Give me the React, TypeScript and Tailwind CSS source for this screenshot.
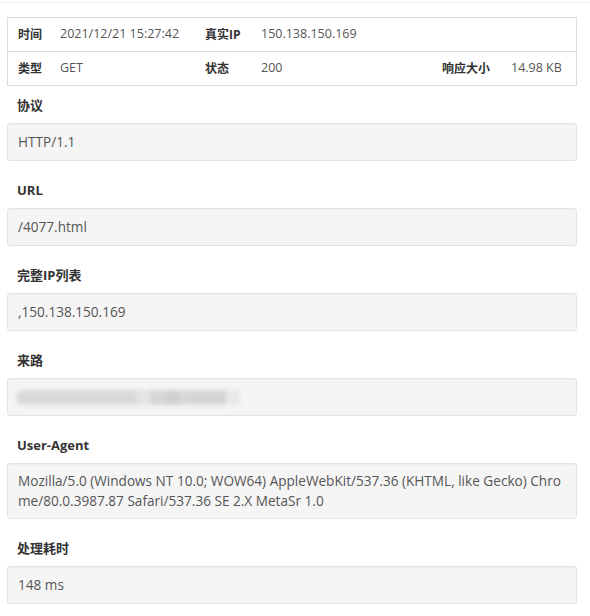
import React from 'react';

const font = { fontFamily: '"Open Sans", "Noto Sans CJK SC", sans-serif' };

const Field: React.FC<{ label: string; children: React.ReactNode; tall?: boolean }> = ({ label, children, tall }) => (
  <div>
    <div className="h-[37px] pl-[10px] pt-[10px] text-[13px] font-bold text-[#333] leading-[18px]">{label}</div>
    <div
      className={`rounded-[3px] border border-[#e3e3e3] bg-[#f5f5f5] px-[10px] text-[13.6px] text-[#555] shadow-[inset_0_1px_1px_rgba(0,0,0,0.03)] ${
        tall ? 'py-[7px] leading-[20px] break-all' : 'h-[38px] flex items-center'
      }`}
    >
      {children}
    </div>
  </div>
);

const cols = 'grid grid-cols-[42px_145px_56px_181px_69px_1fr] items-center';

export default function App() {
  return (
    <div className="w-[590px] h-[616px] bg-white" style={font}>
      <div className="h-[3px] border-b border-[#eeeeee]" />
      <div className="pl-[7px] pr-[13px] pt-[14px] flex flex-col gap-[10px]">
        <div className="border border-[#dddddd] text-[12.5px]">
          <div className={`${cols} h-[34px] border-b border-[#dddddd]`}>
            <div className="pl-[10px] font-bold text-[#333] text-[12px]">时间</div>
            <div className="pl-[10px] text-[#555]">2021/12/21 15:27:42</div>
            <div className="pl-[10px] font-bold text-[#333] text-[12px]">真实IP</div>
            <div className="pl-[10px] text-[#555]">150.138.150.169</div>
            <div />
            <div />
          </div>
          <div className={`${cols} h-[33px]`}>
            <div className="pl-[10px] font-bold text-[#333] text-[12px]">类型</div>
            <div className="pl-[10px] text-[#555]">GET</div>
            <div className="pl-[10px] font-bold text-[#333] text-[12px]">状态</div>
            <div className="pl-[10px] text-[#555]">200</div>
            <div className="pl-[10px] font-bold text-[#333] text-[12px] whitespace-nowrap">响应大小</div>
            <div className="pl-[10px] text-[#555]">14.98 KB</div>
          </div>
        </div>
        <div className="flex flex-col gap-[10px] -mt-[10px]">
          <Field label="协议">HTTP/1.1</Field>
          <Field label="URL">/4077.html</Field>
          <Field label="完整IP列表">,150.138.150.169</Field>
          <Field label="来路">
            <div className="flex items-center h-[18px] -ml-[2px] blur-[2px]">
              <div className="w-[120px] h-[15px] bg-[#d9d9d9] rounded-l-full" />
              <div className="w-[14px] h-[15px] bg-[#e3e3e3]" />
              <div className="w-[16px] h-[15px] bg-[#d6d6d6]" />
              <div className="w-[14px] h-[15px] bg-[#d0d0d0]" />
              <div className="w-[12px] h-[15px] bg-[#d8d8d8]" />
              <div className="w-[34px] h-[15px] bg-[#d4d4d4]" />
              <div className="w-[14px] h-[15px] bg-[#e8e8e8]" />
            </div>
          </Field>
          <Field label="User-Agent" tall>
            Mozilla/5.0 (Windows NT 10.0; WOW64) AppleWebKit/537.36 (KHTML, like Gecko) Chrome/80.0.3987.87 Safari/537.36 SE 2.X MetaSr 1.0
          </Field>
          <Field label="处理耗时">148 ms</Field>
        </div>
      </div>
    </div>
  );
}
